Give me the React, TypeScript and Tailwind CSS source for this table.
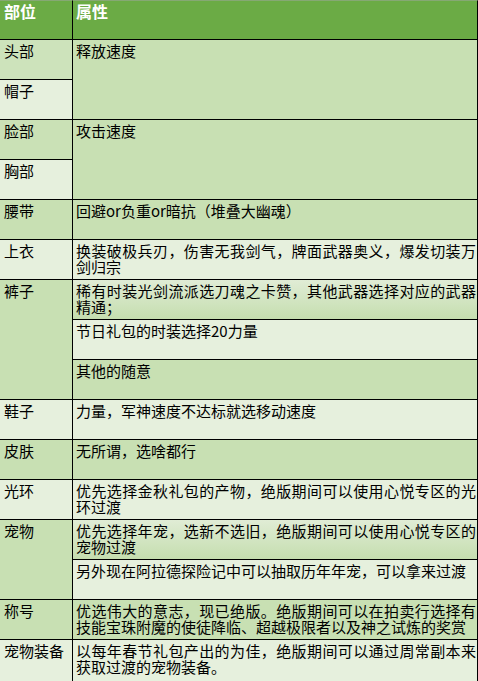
import React from "react";

const G = "bg-[#c8e0b3]";
const L = "bg-[#e6f0dd]";
const GR = "bg-gradient-to-b from-[#e0ecd5] to-[#c5deaf]";

type Cell = { text: string; bg: string; span?: string; last?: boolean };

function LeftCell({ text, bg, span = "", last }: Cell) {
  return (
    <div
      className={`${bg} ${span} border-r border-black ${last ? "" : "border-b"} pl-[4px] pt-[3px] text-[15px] leading-[16px] text-black`}
    >
      {text}
    </div>
  );
}

function RightCell({ text, bg, span = "", last }: Cell) {
  return (
    <div
      className={`${bg} ${span} border-r border-black ${last ? "" : "border-b"} pl-[3px] pr-[1px] pt-[3px] text-[15px] leading-[16px] text-black text-justify`}
    >
      {text}
    </div>
  );
}

export default function App() {
  return (
    <div
      className="w-[478px] h-[681px] overflow-hidden bg-white"
      style={{ fontFamily: '"Noto Sans CJK SC", "Noto Sans", sans-serif' }}
    >
      <div className="grid grid-cols-[73px_405px] grid-rows-[repeat(16,40px)_41px]">
        {/* header */}
        <div className="bg-[#6bab45] border-t border-t-[#86a874] border-r border-b border-black pl-[4px] pt-[2px] text-[16px] leading-[16px] font-bold text-white">
          部位
        </div>
        <div className="bg-[#6bab45] border-t border-t-[#86a874] border-r border-b border-black pl-[3px] pt-[2px] text-[16px] leading-[16px] font-bold text-white">
          属性
        </div>

        {/* 头部 / 帽子 */}
        <LeftCell text="头部" bg="bg-[#cde3bb]" />
        <RightCell text="释放速度" bg={G} span="row-span-2" />
        <LeftCell text="帽子" bg={L} />

        {/* 脸部 / 胸部 */}
        <LeftCell text="脸部" bg="bg-[#cae1b6]" />
        <RightCell text="攻击速度" bg={G} span="row-span-2" />
        <LeftCell text="胸部" bg={L} />

        {/* 腰带 */}
        <LeftCell text="腰带" bg={G} />
        <RightCell text="回避or负重or暗抗（堆叠大幽魂）" bg={G} />

        {/* 上衣 */}
        <LeftCell text="上衣" bg={L} />
        <RightCell text="换装破极兵刃，伤害无我剑气，牌面武器奥义，爆发切装万剑归宗" bg={L} />

        {/* 裤子 */}
        <LeftCell text="裤子" bg={G} span="row-span-3" />
        <RightCell text="稀有时装光剑流派选刀魂之卡赞，其他武器选择对应的武器精通；" bg={GR} />
        <RightCell text="节日礼包的时装选择20力量" bg={L} />
        <RightCell text="其他的随意" bg={G} />

        {/* 鞋子 */}
        <LeftCell text="鞋子" bg={L} />
        <RightCell text="力量，军神速度不达标就选移动速度" bg={L} />

        {/* 皮肤 */}
        <LeftCell text="皮肤" bg={G} />
        <RightCell text="无所谓，选啥都行" bg={G} />

        {/* 光环 */}
        <LeftCell text="光环" bg={L} />
        <RightCell text="优先选择金秋礼包的产物，绝版期间可以使用心悦专区的光环过渡" bg={L} />

        {/* 宠物 */}
        <LeftCell text="宠物" bg={G} span="row-span-2" />
        <RightCell text="优先选择年宠，选新不选旧，绝版期间可以使用心悦专区的宠物过渡" bg={GR} />
        <RightCell text="另外现在阿拉德探险记中可以抽取历年年宠，可以拿来过渡" bg={L} />

        {/* 称号 */}
        <LeftCell text="称号" bg={G} />
        <RightCell text="优选伟大的意志，现已绝版。绝版期间可以在拍卖行选择有技能宝珠附魔的使徒降临、超越极限者以及神之试炼的奖赏" bg={G} />

        {/* 宠物装备 */}
        <LeftCell text="宠物装备" bg={L} last />
        <RightCell text="以每年春节礼包产出的为佳，绝版期间可以通过周常副本来获取过渡的宠物装备。" bg={L} last />
      </div>
    </div>
  );
}
